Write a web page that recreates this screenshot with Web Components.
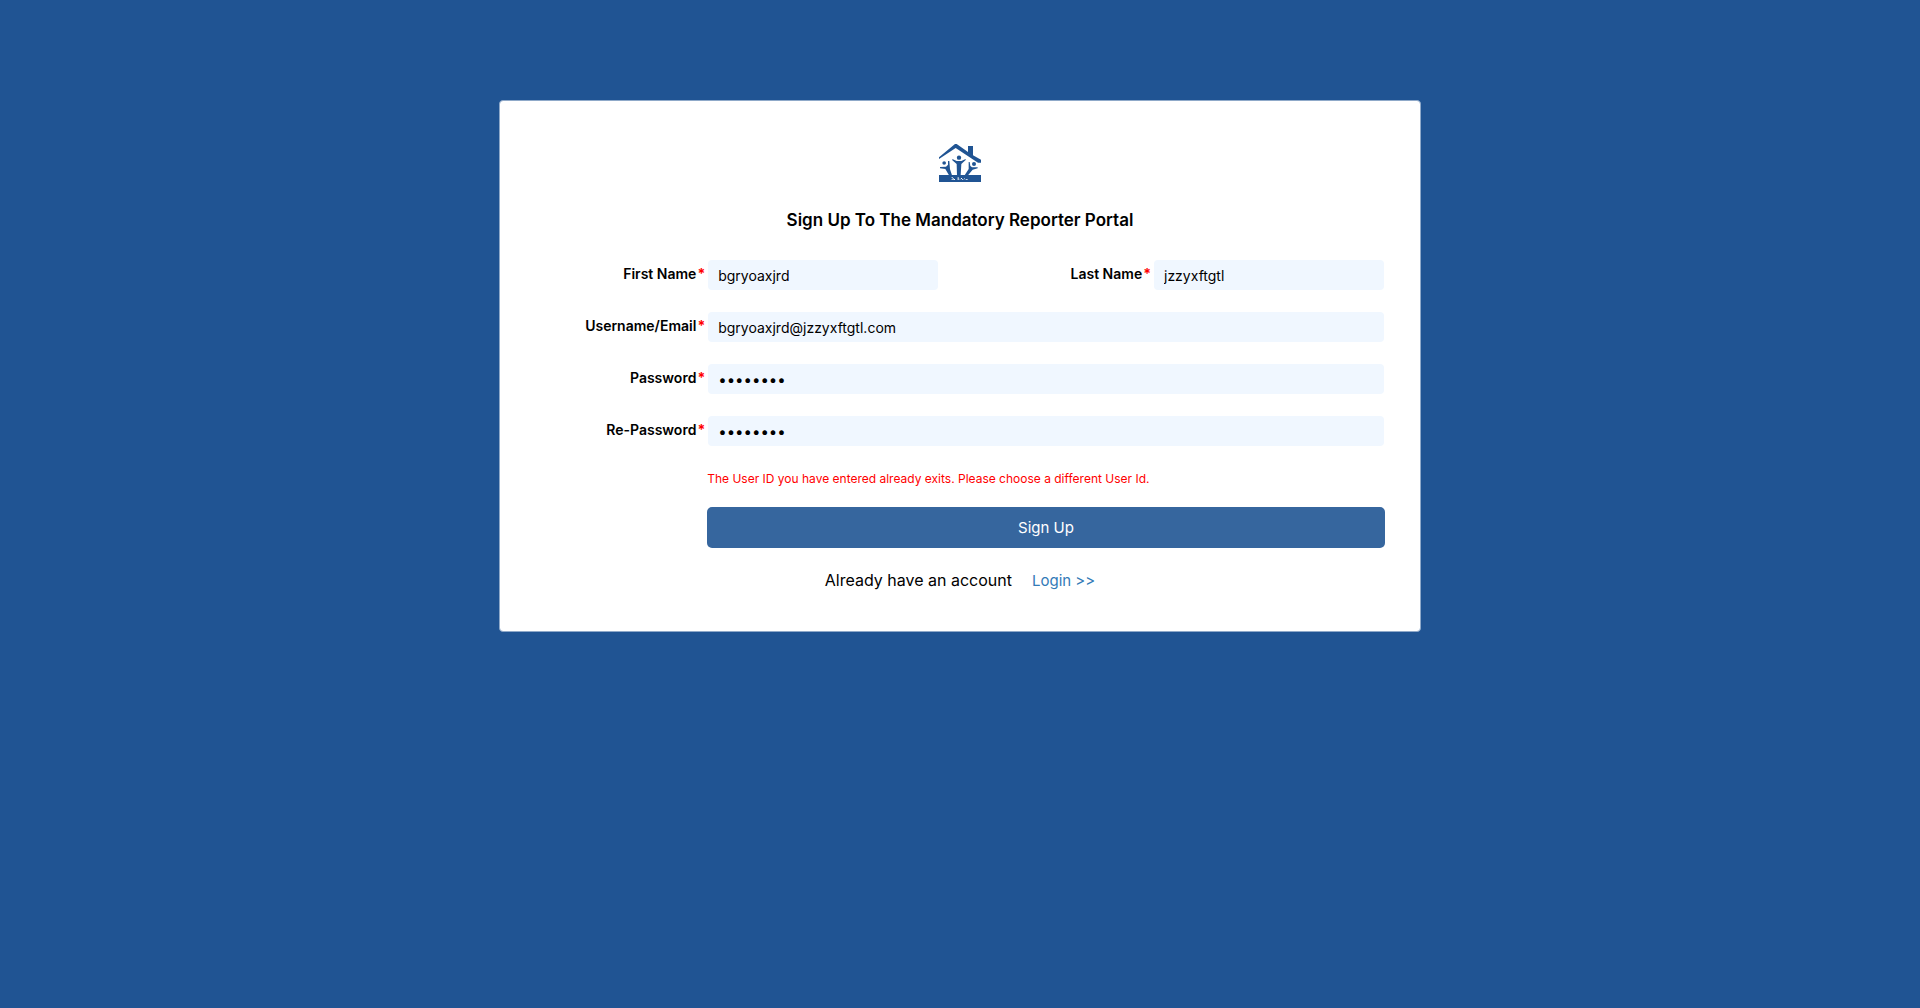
<!DOCTYPE html>
<html lang="en">
<head>
<meta charset="utf-8">
<title>Mandatory Reporter Portal</title>
<style>
  body {
    margin: 0;
    min-height: 100vh;
    background: #205493;
    color: #000;
    font-family: "Century Gothic", Inter, "Liberation Sans", sans-serif;
    font-size: 14px;
    line-height: 20px;
  }
</style>
</head>
<body>
<signup-page></signup-page>
<script>
class PortalLogo extends HTMLElement {
  connectedCallback() {
    this.attachShadow({ mode: "open" }).innerHTML = `
      <style>
        :host { display: block; width: 42px; height: 38px; }
        svg { display: block; width: 100%; height: 100%; fill: #205493; }
      </style>
      <svg viewBox="57 42 126 114" role="img" aria-label="Portal logo">
        <path d="M57 82 L105 42 H110 L144 66 V48 H159 V76 L183 89 V98 H174 L107 54 L57 87 Z"/>
        <circle cx="117" cy="83" r="6.5"/>
        <circle cx="72.5" cy="99" r="5.5"/>
        <circle cx="162" cy="102" r="6"/>
        <path d="M97 87 L110 93 H124 L137 87 V90 L124 102 L122 136 H111 L110 102 L97 91 Z"/>
        <path d="M60 111 L78 110 L84 104 V93 H88 L90 118 L96 136 H87 L76 117 L60 115 Z"/>
        <path d="M146 96 H149 L151 108 L156 112 L173 112 V115 L158 119 L144 136 H134 L146 117 Z"/>
        <path d="M57 135 H183 V156 H57 Z"/>
        <path fill="#fff" d="M95 141h3v3h-3z M98 144h3v6h-3z M95 147h2v3h-2z M102 147h3v3h-3z M113 142h3v8h-3z M119 146h2v3h-2z M123 144h3v3h-3z M126 148h4v2h-4z M133 145h2v3h-2z M137 147h6v2h-6z"/>
      </svg>`;
  }
}
customElements.define("portal-logo", PortalLogo);

class FormField extends HTMLElement {
  connectedCallback() {
    const type = this.getAttribute("type") || "text";
    this.attachShadow({ mode: "open" }).innerHTML = `
      <style>
        :host { display: flex; min-width: 0; --label: 172px; flex: 1 1 var(--label); }
        :host([wide-label]) { --label: 216px; }
        label {
          flex: 0 0 var(--label);
          box-sizing: border-box;
          padding: 4px 3px 0 0;
          text-align: right;
          font-weight: 600;
          white-space: nowrap;
        }
        span { color: #f00; padding-left: 1px; font-weight: 700; }
        input {
          flex: 1 1 0;
          min-width: 0;
          box-sizing: border-box;
          height: 30px;
          margin: 0;
          padding: 0 10px;
          border: 0;
          border-radius: 4px;
          background: #f0f7ff;
          color: #000;
          font: inherit;
        }
        input[type="password"] { font-size: 15px; }
      </style>
      <label for="box"><slot></slot><span>*</span></label>
      <input id="box" type="${type}" value="${this.getAttribute("value")}">`;
  }
}
customElements.define("form-field", FormField);

class FormRow extends HTMLElement {
  connectedCallback() {
    this.attachShadow({ mode: "open" }).innerHTML = `
      <style>:host { display: flex; }</style>
      <slot></slot>`;
  }
}
customElements.define("form-row", FormRow);

class SignupCard extends HTMLElement {
  connectedCallback() {
    this.attachShadow({ mode: "open" }).innerHTML = `
      <style>
        :host {
          display: block;
          width: 48%;
          box-sizing: border-box;
          padding: 43px 36px 40px;
          border: 1px solid #8fa9c9;
          border-radius: 4px;
          background: #fff;
        }
        header { display: flex; flex-direction: column; align-items: center; gap: 28px; }
        ::slotted(h1) { margin: 0; font-size: 17px; line-height: 20px; font-weight: 600; }
      </style>
      <header><portal-logo></portal-logo><slot name="title"></slot></header>
      <slot></slot>`;
  }
}
customElements.define("signup-card", SignupCard);

class SignupPage extends HTMLElement {
  connectedCallback() {
    this.attachShadow({ mode: "open" }).innerHTML = `
      <style>
        :host { display: flex; justify-content: center; padding-top: 100px; }
        form { display: flex; flex-direction: column; gap: 22px; margin-top: 30px; }
        .actions { margin: 1px -1px 0 171px; }
        .error { margin: 0 0 18px; color: #f00; font-size: 12px; }
        button {
          display: block;
          width: 100%;
          height: 41px;
          padding: 0;
          border: 0;
          border-radius: 5px;
          background: #36669e;
          color: #fff;
          font: inherit;
          font-size: 15px;
        }
        .login { display: flex; justify-content: center; align-items: baseline; gap: 20px; margin: 0; font-size: 16px; }
        a { color: #337ab7; font-size: 15px; text-decoration: none; }
      </style>
      <signup-card>
        <h1 slot="title">Sign Up To The Mandatory Reporter Portal</h1>
        <form>
          <form-row>
            <form-field value="bgryoaxjrd">First Name</form-field>
            <form-field wide-label value="jzzyxftgtl">Last Name</form-field>
          </form-row>
          <form-row><form-field value="bgryoaxjrd@jzzyxftgtl.com">Username/Email</form-field></form-row>
          <form-row><form-field type="password" value="password">Password</form-field></form-row>
          <form-row><form-field type="password" value="password">Re-Password</form-field></form-row>
          <div class="actions">
            <p class="error">The User ID you have entered already exits. Please choose a different User Id.</p>
            <button type="button">Sign Up</button>
          </div>
          <p class="login"><span>Already have an account</span><a href="#login">Login &gt;&gt;</a></p>
        </form>
      </signup-card>`;
  }
}
customElements.define("signup-page", SignupPage);
</script>
</body>
</html>
